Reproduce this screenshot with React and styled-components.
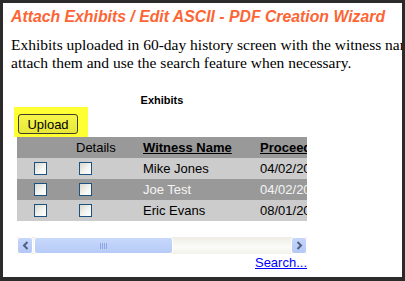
import React from 'react'
import styled, { createGlobalStyle } from 'styled-components'

const GlobalStyle = createGlobalStyle`
  html, body {
    margin: 0;
    padding: 0;
    background: #2b2b2b;
  }
  body {
    font-family: "Liberation Sans", Arial, sans-serif;
  }
`

const Frame = styled.div`
  width: 405px;
  height: 281px;
  padding: 3px 3px 4px 3px;
  box-sizing: border-box;
`

const Panel = styled.div`
  width: 399px;
  height: 274px;
  background: #ffffff;
  overflow: hidden;
  padding: 4px 0 0 8px;
  box-sizing: border-box;
`

const Title = styled.h1`
  margin: 0;
  font-family: "Liberation Sans", Arial, sans-serif;
  font-size: 15.8px;
  line-height: 20px;
  font-weight: bold;
  font-style: italic;
  color: #fd6535;
  white-space: nowrap;
`

const Intro = styled.p`
  margin: 9px 0 0 0;
  font-family: "Liberation Serif", "Times New Roman", serif;
  font-size: 15.5px;
  line-height: 18px;
  color: #000;
  white-space: nowrap;
`

const Section = styled.div`
  margin: 22px 0 0 3px;
  width: 296px;
`

const Caption = styled.div`
  margin-left: 3px;
  width: 290px;
  text-align: center;
  font-size: 11px;
  line-height: 13px;
  font-weight: bold;
  color: #000;
`

const Highlight = styled.div`
  display: inline-block;
  background: #ffff33;
  padding: 7px 10px 3px 4px;
`

const Button = styled.button`
  display: block;
  width: 60px;
  height: 20px;
  padding: 0;
  border: 1px solid #3c3c28;
  border-radius: 3px;
  background: linear-gradient(#f6f64a, #e8e83a);
  font-family: "Liberation Sans", Arial, sans-serif;
  font-size: 13px;
  color: #000;
`

const Grid = styled.div`
  margin-left: 3px;
  width: 290px;
  overflow: hidden;
`

const Row = styled.div`
  display: grid;
  grid-template-columns: 46px 80px 117px 200px;
  height: 21px;
  align-items: center;
  background: ${p => (p.$dark || p.$head ? '#999999' : '#cccccc')};
  color: ${p => (p.$dark ? '#f4f4f4' : '#000')};
  font-size: 13px;
  white-space: nowrap;
`

const Cell = styled.div`
  padding-left: ${p => p.$pad || 0}px;
  display: flex;
  justify-content: ${p => (p.$center ? 'center' : 'flex-start')};
`

const HeadLink = styled.span`
  font-weight: bold;
  text-decoration: underline;
  color: #000;
`

const Check = styled.span`
  display: block;
  width: 13px;
  height: 13px;
  box-sizing: border-box;
  border: 1px solid #1c5180;
  background: linear-gradient(135deg, #d9d9d2 0%, #f4f4f0 55%, #ffffff 100%);
`

const Scrollbar = styled.div`
  margin: 16px 0 0 3px;
  width: 290px;
  height: 17px;
  display: flex;
  align-items: stretch;
  background: linear-gradient(#eeede5, #fbfbf8 60%, #f2f1ea);
`

const ArrowButton = styled.div`
  width: 16px;
  box-sizing: border-box;
  border: 1px solid #ffffff;
  border-radius: 3px;
  background: linear-gradient(#c6d6fb, #b4c8f5);
  display: flex;
  align-items: center;
  justify-content: center;
  margin-left: ${p => (p.$right ? 'auto' : '0')};
`

const Thumb = styled.div`
  width: 139px;
  margin-left: 1px;
  box-sizing: border-box;
  border: 1px solid #ffffff;
  border-radius: 3px;
  background: linear-gradient(#c8d8fc, #b6cbf7);
  display: flex;
  align-items: center;
  justify-content: center;
`

const Grip = styled.span`
  width: 7px;
  height: 6px;
  background: repeating-linear-gradient(90deg, #8ea6e2 0 1px, transparent 1px 2px);
`

const SearchRow = styled.div`
  width: 293px;
  margin-top: 1px;
  text-align: right;
  font-size: 13px;
  line-height: 15px;
`

const SearchLink = styled.a`
  color: #0000ff;
  text-decoration: underline;
`

const Chevron = ({ right }) => (
  <svg width="7" height="9" viewBox="0 0 7 9">
    <path
      d={right ? 'M1.5 1 L5 4.5 L1.5 8' : 'M5.5 1 L2 4.5 L5.5 8'}
      fill="none"
      stroke="#4d6185"
      strokeWidth="2"
    />
  </svg>
)

const rows = [
  { name: 'Mike Jones', date: '04/02/2009' },
  { name: 'Joe Test', date: '04/02/2009', dark: true },
  { name: 'Eric Evans', date: '08/01/2009' },
]

const App = () => {
  return (
    <Frame>
      <GlobalStyle />
      <Panel>
        <Title>Attach Exhibits / Edit ASCII - PDF Creation Wizard</Title>
        <Intro>
          Exhibits uploaded in 60-day history screen with the witness name will appear here. You can
          <br />
          attach them and use the search feature when necessary.
        </Intro>
        <Section>
          <Caption>Exhibits</Caption>
          <Highlight>
            <Button>Upload</Button>
          </Highlight>
          <Grid>
            <Row $head>
              <Cell />
              <Cell $pad={13}>Details</Cell>
              <Cell><HeadLink>Witness Name</HeadLink></Cell>
              <Cell><HeadLink>Proceedings Date</HeadLink></Cell>
            </Row>
            {rows.map(r => (
              <Row key={r.name} $dark={r.dark}>
                <Cell $center><Check /></Cell>
                <Cell $pad={16}><Check /></Cell>
                <Cell>{r.name}</Cell>
                <Cell>{r.date}</Cell>
              </Row>
            ))}
          </Grid>
          <Scrollbar>
            <ArrowButton><Chevron /></ArrowButton>
            <Thumb><Grip /></Thumb>
            <ArrowButton $right><Chevron right /></ArrowButton>
          </Scrollbar>
          <SearchRow>
            <SearchLink href="#">Search...</SearchLink>
          </SearchRow>
        </Section>
      </Panel>
    </Frame>
  )
}

export default App
